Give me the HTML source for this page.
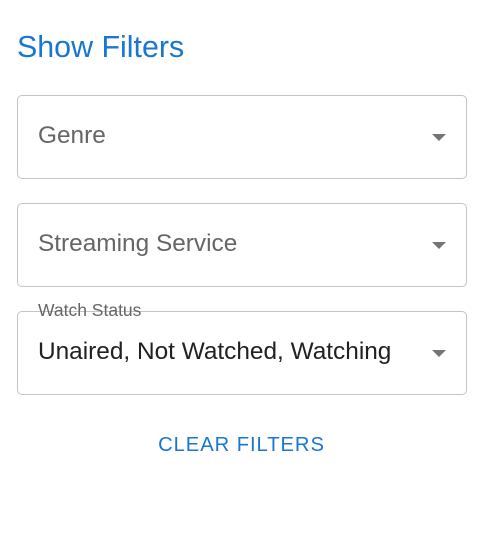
<!DOCTYPE html>
<html><head><style>
body{margin:0;width:486px;height:555px;background:#fff;font-family:"Liberation Sans",sans-serif;position:relative}
h1{position:absolute;left:17px;top:29px;margin:0;font-weight:400;font-size:30.4px;color:#1976d2;line-height:36px}
.box{position:absolute;left:17px;width:448px;height:82px;border:1px solid #c4c4c4;border-radius:5px}
.box span{position:absolute;left:20px;top:26px;font-size:24.4px;line-height:28px;color:#666}
.box i{position:absolute;left:414px;top:38px;width:0;height:0;border-left:7px solid transparent;border-right:7px solid transparent;border-top:7px solid #757575}
.lab{position:absolute;left:38px;top:300px;font-size:17.5px;color:#666;line-height:20px}
.clear{position:absolute;left:0;width:483px;text-align:center;top:432px;font-size:20.2px;letter-spacing:0.95px;color:#1976d2;line-height:26px}
</style></head><body>
<h1>Show Filters</h1>
<div class="box" style="top:95px"><span>Genre</span><i></i></div>
<div class="box" style="top:203px"><span>Streaming Service</span><i></i></div>
<div class="box" style="top:311px"><span style="color:#212121">Unaired, Not Watched, Watching</span><i></i></div>
<div class="lab">Watch Status</div>
<div class="clear">CLEAR FILTERS</div>
</body></html>
